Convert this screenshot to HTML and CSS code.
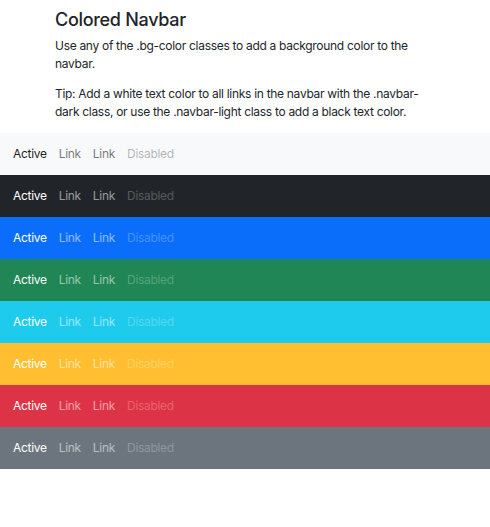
FILE: index.html
```html
<!DOCTYPE html>
<html lang="en">
<head>
<meta charset="utf-8">
<title>Colored Navbar</title>
<link rel="stylesheet" href="styles.css">
</head>
<body>
<div class="intro">
  <h4 class="title">Colored Navbar</h4>
  <p>Use any of the .bg-color classes to add a background color to the navbar.</p>
  <p>Tip: Add a white text color to all links in the navbar with the .navbar-dark class, or use the .navbar-light class to add a black text color.</p>
</div>

<nav class="navbar light bg-light">
  <a class="link active">Active</a><a class="link">Link</a><a class="link">Link</a><a class="link disabled">Disabled</a>
</nav>
<nav class="navbar dark bg-dark">
  <a class="link active">Active</a><a class="link">Link</a><a class="link">Link</a><a class="link disabled">Disabled</a>
</nav>
<nav class="navbar dark bg-primary">
  <a class="link active">Active</a><a class="link">Link</a><a class="link">Link</a><a class="link disabled">Disabled</a>
</nav>
<nav class="navbar dark bg-success">
  <a class="link active">Active</a><a class="link">Link</a><a class="link">Link</a><a class="link disabled">Disabled</a>
</nav>
<nav class="navbar dark bg-info">
  <a class="link active">Active</a><a class="link">Link</a><a class="link">Link</a><a class="link disabled">Disabled</a>
</nav>
<nav class="navbar dark bg-warning">
  <a class="link active">Active</a><a class="link">Link</a><a class="link">Link</a><a class="link disabled">Disabled</a>
</nav>
<nav class="navbar dark bg-danger">
  <a class="link active">Active</a><a class="link">Link</a><a class="link">Link</a><a class="link disabled">Disabled</a>
</nav>
<nav class="navbar dark bg-secondary">
  <a class="link active">Active</a><a class="link">Link</a><a class="link">Link</a><a class="link disabled">Disabled</a>
</nav>
</body>
</html>
```
FILE: styles.css
```css
html, body {
  margin: 0;
  padding: 0;
  background: #fff;
}
body {
  font-family: Inter, "Liberation Sans", sans-serif;
  font-size: 12px;
  line-height: 18px;
  letter-spacing: -0.025em;
  color: #212529;
}
.intro {
  padding: 9px 55px 0 55px;
}
.title {
  margin: 0 0 6px 0;
  font-size: 18px;
  line-height: 21.6px;
  font-weight: 500;
}
.intro p {
  margin: 0 0 12px 0;
}
.navbar {
  display: flex;
  align-items: center;
  padding: 6px 7px;
}
.link {
  display: block;
  padding: 6px 6px;
  line-height: 18px;
}
.light .link { color: rgba(0,0,0,.55); }
.light .link.active { color: rgba(0,0,0,.9); }
.light .link.disabled { color: rgba(0,0,0,.3); }
.dark .link { color: rgba(255,255,255,.55); }
.dark .link.active { color: #fff; }
.dark .link.disabled { color: rgba(255,255,255,.25); }
.bg-light { background: #f8f9fa; }
.bg-dark { background: #212529; }
.bg-primary { background: #0b6efb; }
.bg-success { background: #208655; }
.bg-info { background: #1ecbec; }
.bg-warning { background: #ffbf31; }
.bg-danger { background: #dc3446; }
.bg-secondary { background: #6c757d; }
```
